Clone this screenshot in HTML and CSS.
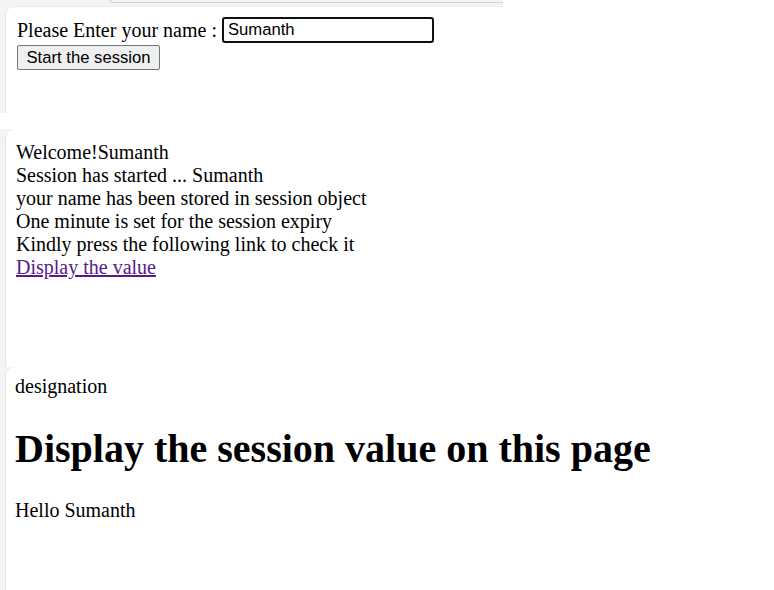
FILE: index.html
```html
<!DOCTYPE html>
<html>
<head>
<meta charset="utf-8">
<title>Session</title>
<link rel="stylesheet" href="styles.css">
</head>
<body>
<div class="shot shot1">
  <div class="tabbar"><div class="tabline"></div></div>
  <div class="page page1">
    <div class="row"><span>Please Enter your name :</span><input class="name" type="text" value="Sumanth"></div>
    <button class="btn" type="button">Start the session</button>
  </div>
</div>
<div class="gap"></div>
<div class="shot shot2">
  <div class="page page2">
    <div>Welcome!Sumanth</div>
    <div>Session has started ... Sumanth</div>
    <div>your name has been stored in session object</div>
    <div>One minute is set for the session expiry</div>
    <div>Kindly press the following link to check it</div>
    <div><a class="link" href="#">Display the value</a></div>
  </div>
</div>
<div class="shot shot3">
  <div class="page page3">
    <div>designation</div>
    <h1 class="title">Display the session value on this page</h1>
    <div>Hello Sumanth</div>
  </div>
</div>
</body>
</html>
```
FILE: styles.css
```css
html, body {
  margin: 0;
  padding: 0;
  background: #ffffff;
}
body {
  width: 774px;
  height: 590px;
  overflow: hidden;
  font-family: "Liberation Serif", "Times New Roman", serif;
  font-size: 20px;
  color: #000000;
  display: flex;
  flex-direction: column;
}
.shot {
  background: #f4f4f4;
  display: flex;
}
.shot1 {
  width: 503px;
  height: 113px;
  flex-direction: column;
  padding-left: 5px;
  box-sizing: border-box;
}
.tabbar {
  height: 6px;
  padding-left: 110px;
  margin-left: -5px;
  box-sizing: border-box;
}
.tabline {
  height: 2px;
  border-bottom: 1px solid #d4d4d4;
  border-left: 1px solid #d4d4d4;
  border-bottom-left-radius: 6px;
}
.page {
  background: #ffffff;
  border-left: 1px solid #e6e6e6;
  border-top-left-radius: 9px;
  flex: 1;
}
.page1 {
  border-top: 1px solid #ececec;
  padding: 10px 0 0 11px;
}
.row {
  display: flex;
  align-items: center;
  gap: 5px;
}
.name {
  box-sizing: border-box;
  width: 212px;
  height: 26px;
  margin: 0;
  padding: 0 4px;
  border: 2px solid #101010;
  border-radius: 3px;
  outline: none;
  font-family: "Liberation Sans", Arial, sans-serif;
  font-size: 16.67px;
  color: #000000;
  background: #ffffff;
}
.btn {
  display: block;
  margin-top: 2px;
  width: 143px;
  height: 25px;
  padding: 0;
  background: #efefef;
  border: 1px solid #767676;
  border-radius: 2px;
  font-family: "Liberation Sans", Arial, sans-serif;
  font-size: 16.67px;
  color: #000000;
}
.gap {
  height: 16px;
  flex: none;
}
.shot2 {
  height: 238px;
  flex: none;
  padding-left: 5px;
}
.page2 {
  padding: 12px 0 0 10px;
}
.link {
  color: #551a8b;
  text-decoration: underline;
}
.shot3 {
  flex: 1;
  padding-left: 5px;
}
.page3 {
  padding: 8px 0 0 9px;
}
.title {
  font-size: 40px;
  font-weight: bold;
  margin: 28px 0 27px;
  line-height: 46px;
}
```
